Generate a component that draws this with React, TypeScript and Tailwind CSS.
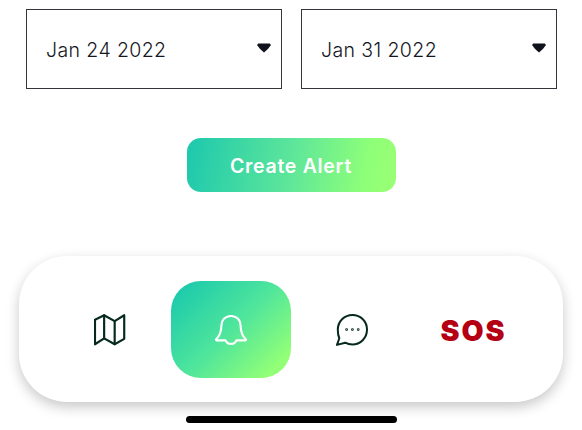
export default function App() {
  const DateBox = ({ label, className }: { label: string; className: string }) => (
    <div className={`flex h-[80px] items-center justify-between border border-[#33363a] pl-[19px] pr-[10px] ${className}`}>
      <span className="pt-[3px] text-[19.5px] font-light leading-none tracking-[0.4px] text-[#14171e] [font-family:Inter,sans-serif]">{label}</span>
      <svg width="14" height="10" viewBox="0 0 14 10" className="mb-[2px]">
        <path d="M1.5 0.5 H12.5 Q14 0.5 13.6 2.4 Q11 6.5 7 9.5 Q3 6.5 0.4 2.4 Q0 0.5 1.5 0.5Z" fill="#10121c" />
      </svg>
    </div>
  );

  return (
    <div className="flex h-[430px] w-[582px] flex-col overflow-hidden bg-white pt-[9px] [font-family:Inter,sans-serif]">
      <div className="ml-[26px] flex gap-[19px]">
        <DateBox label="Jan 24 2022" className="w-[256px]" />
        <DateBox label="Jan 31 2022" className="w-[256px]" />
      </div>

      <div className="mt-[49px] flex justify-center">
        <button className="flex h-[54px] w-[209px] items-center justify-center rounded-[14px] bg-[linear-gradient(100deg,#1cc8ae_0%,#5ee69a_50%,#8eff78_85%,#9bff74_100%)] pt-[3px] text-[19.5px] font-semibold tracking-[0.7px] text-white">
          Create Alert
        </button>
      </div>

      <nav className="ml-[19px] mt-[64px] flex h-[146px] w-[544px] items-center rounded-[48px] bg-white shadow-[0_5px_13px_rgba(0,0,0,0.22)]">
        <div className="ml-[75px] mt-[2px] flex w-[31.5px] justify-center">
          <svg width="32" height="32" viewBox="0 0 32 32" fill="none" stroke="#052a1c" strokeWidth="2.2" strokeLinejoin="round" strokeLinecap="round">
            <path d="M1 5.5 L10.3 1 L21 7 L30.7 1 V25 L21 30.5 L10.3 24.5 L1 30.5 Z" />
            <path d="M10.3 1 V24.5 M21 7 V30.5" />
          </svg>
        </div>
        <div className="ml-[45px] flex h-[97px] w-[120px] items-center justify-center rounded-[30px] bg-[linear-gradient(135deg,#14c6ae_0%,#4fe59c_50%,#92ff76_88%)]">
          <svg width="32" height="30" viewBox="0 0 32 30" fill="none" stroke="white" strokeWidth="2.1" strokeLinejoin="round" strokeLinecap="round" className="mt-[2px]">
            <path d="M16 1 C10 1 6.4 5.4 6.4 10.4 C6.4 16.5 5.5 20 1 24.6 L1.4 25.4 H10.6 C11.4 27.6 13.4 28.9 16 28.9 C18.6 28.9 20.6 27.6 21.4 25.4 H30.6 L31 24.6 C26.5 20 25.6 16.5 25.6 10.4 C25.6 5.4 22 1 16 1 Z" />
          </svg>
        </div>
        <div className="ml-[45px] mt-[2px] flex w-[32px] justify-center">
          <svg width="32" height="32" viewBox="0 0 32 32" fill="none" stroke="#052a1c" strokeWidth="2" strokeLinejoin="round" strokeLinecap="round">
            <path d="M16.5 1 C24.8 1 31 7.5 31 15.6 C31 24 24.5 30.6 16.3 30.6 C13.6 30.6 11.3 29.9 9.2 28.7 L1 30.9 L3.3 24.2 C2.2 21.9 1.8 19.2 1.8 15.8 C1.8 7.5 8.2 1 16.5 1 Z" />
            <circle cx="10.6" cy="15.6" r="0.4" fill="#052a1c" />
            <circle cx="16.4" cy="15.6" r="0.4" fill="#052a1c" />
            <circle cx="22.2" cy="15.6" r="0.4" fill="#052a1c" />
          </svg>
        </div>
        <span className="ml-[73px] mt-[4px] text-[28.5px] font-black leading-none tracking-[2px] text-[#b40012]">SOS</span>
      </nav>

      <div className="ml-[186px] mt-[14px] h-[7px] w-[211px] rounded-full bg-black" />
    </div>
  );
}
